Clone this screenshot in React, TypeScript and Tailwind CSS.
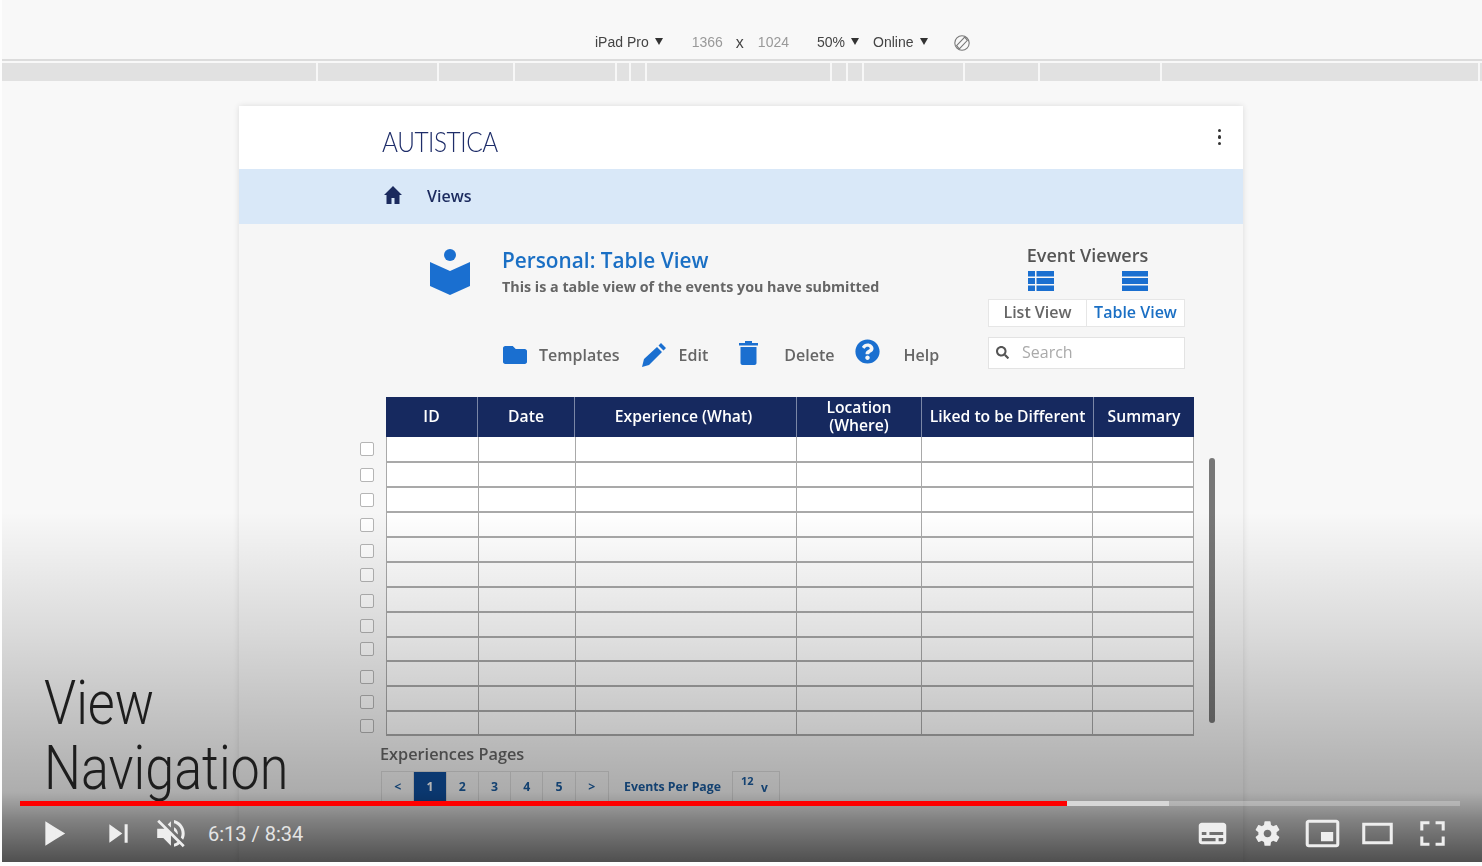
import { FaFolder, FaQuestionCircle, FaSearch } from "react-icons/fa";

const rulerWidths = [316, 121, 76, 102, 14, 16, 185, 16, 16, 101, 75, 122, 318];
const columns = ["w-[92px]", "w-[97px]", "w-[222px]", "w-[125px]", "w-[172px]", "w-[100px]"];
const headers = ["ID", "Date", "Experience (What)", "Location (Where)", "Liked to be Different", "Summary"];
const rows = [
  { height: "h-[26px]", box: "" },
  { height: "h-[25px]", box: "" },
  { height: "h-[25px]", box: "" },
  { height: "h-[25px]", box: "" },
  { height: "h-[25px]", box: "mt-[2px]" },
  { height: "h-[25px]", box: "" },
  { height: "h-[25px]", box: "mt-[2px]" },
  { height: "h-[25px]", box: "mt-[2px]" },
  { height: "h-[24px]", box: "" },
  { height: "h-[25px]", box: "mt-[6px]" },
  { height: "h-[25px]", box: "mt-[6px]" },
  { height: "h-[24px]", box: "mt-[6px]" },
];
const pages = ["<", "1", "2", "3", "4", "5", ">"];

function Tri() {
  return <span className="ml-[6px] mb-[3px] inline-block border-x-[4px] border-t-[7px] border-x-transparent border-t-[#333]" />;
}

function Yt({ d, className = "" }: { d: string; className?: string }) {
  return (
    <svg viewBox="0 0 36 36" className={`h-[55px] w-[55px] shrink-0 fill-[#eee] ${className}`}>
      <path d={d} fillRule="evenodd" />
    </svg>
  );
}

function DeviceBar() {
  return (
    <>
      <div className="flex h-[58px] items-center pt-[27px] pl-[593px] text-[14px] text-[#444] [font-family:'Liberation_Sans',sans-serif]">
        <span>iPad Pro</span>
        <Tri />
        <span className="ml-[29px] text-[#999]">1366</span>
        <span className="ml-[13px] text-[16px] text-[#444]">x</span>
        <span className="ml-[14px] text-[#999]">1024</span>
        <span className="ml-[28px]">50%</span>
        <Tri />
        <span className="ml-[14px]">Online</span>
        <Tri />
        <svg viewBox="0 0 20 20" className="ml-[25px] h-[18px] w-[18px] fill-none stroke-[#777] stroke-[1.2]">
          <circle cx="10" cy="10" r="8" />
          <path d="M4 13 13 3.500 16 7 7 16.500z" />
        </svg>
      </div>
      <div className="mt-px h-[2px] bg-[#dcdcdc]" />
      <div className="mt-[2px] flex h-[18px] bg-[#e1e1e1]">
        {rulerWidths.map((w, i) => (
          <div key={i} className="shrink-0 border-r-2 border-[#f7f7f7]" style={{ width: w }} />
        ))}
      </div>
    </>
  );
}

function Toolbar() {
  return (
    <div className="mt-[42px] flex items-center pl-[72px] text-[16px] font-semibold text-[#666]">
      <FaFolder className="h-[24px] w-[26px] text-[#1a6fd0]" />
      <span className="ml-[11px]">Templates</span>
      <svg viewBox="0 0 24 24" className="ml-[22px] h-[24px] w-[24px] shrink-0 fill-[#1a6fd0]">
        <path d="M0 24 2 16 15 4 20 9 7 22ZM16.500 2.500 19 0 24 5 21.500 7.500Z" />
      </svg>
      <span className="ml-[13px]">Edit</span>
      <svg viewBox="0 0 19 24" className="ml-[31px] mb-[4px] h-[24px] w-[19px] shrink-0 fill-[#1a6fd0]">
        <path d="M6 0H13V2H19V4.500H0V2H6ZM1.500 6H17.500V22C17.500 23 16.500 24 15.500 24H3.500C2.500 24 1.500 23 1.500 22Z" />
      </svg>
      <span className="ml-[26px]">Delete</span>
      <FaQuestionCircle className="ml-[21px] mb-[6px] h-[25px] w-[25px] text-[#1a6fd0]" />
      <span className="ml-[23px]">Help</span>
    </div>
  );
}

function EventViewers() {
  return (
    <div className="w-[197px] pt-[20px] text-center">
      <div className="h-[22px] pl-[2px] text-[18px] leading-[22px] font-semibold text-[#555]">Event Viewers</div>
      <div className="mt-[5px] flex h-[20px] pl-[40px]">
        <svg viewBox="0 0 26 20" className="h-[20px] w-[26px] fill-[#1a6fd0]">
          <path d="M0 0h7v5.500H0zM8.500 0H26v5.500H8.500zM0 7h7v6H0zM8.500 7H26v6H8.500zM0 14.500h7V20H0zM8.500 14.500H26V20H8.500z" />
        </svg>
        <svg viewBox="0 0 26 20" className="ml-[68px] h-[20px] w-[26px] fill-[#1a6fd0]">
          <path d="M0 0h26v5.500H0zM0 7h26v6H0zM0 14.500h26V20H0z" />
        </svg>
      </div>
      <div className="mt-[8px] flex h-[28px] border border-[#e6e6e6] bg-white text-[16px] leading-[24px] font-semibold">
        <div className="w-[98px] border-r border-[#e6e6e6] text-[#666]">List View</div>
        <div className="flex-1 text-[#1a6fc4]">Table View</div>
      </div>
      <div className="mt-[10px] flex h-[32px] items-center border border-[#e3e3e3] bg-white pb-[2px] pl-[7px] text-[16px] font-medium text-[#aaa]">
        <FaSearch className="h-[13px] w-[13px] text-[#555]" />
        <span className="ml-[13px]">Search</span>
      </div>
    </div>
  );
}

function DataTable() {
  return (
    <div className="ml-[121px] flex">
      <div>
        <div className="ml-[26px] flex h-[40px] w-[808px] bg-[#16295f] text-center text-[15.700px] leading-[18px] font-semibold text-white">
          {headers.map((h, i) => (
            <div key={h} className={`${columns[i]} flex items-center justify-center border-r border-[#7a86a6] pb-[3px] last:border-r-0 ${i === 3 ? "px-6" : ""} ${i === 2 ? "pr-[4px]" : ""}`}>
              {h}
            </div>
          ))}
        </div>
        {rows.map((row, r) => (
          <div key={r} className={`flex items-center ${row.height}`}>
            <div className={`h-[14px] w-[14px] shrink-0 -translate-y-px rounded-[2px] border border-[#b5b5b5] bg-white ${row.box}`} />
            <div className="ml-[12px] flex h-full w-[808px] border-x border-b-2 border-[#a9a9a9] bg-white">
              {columns.map((c) => (
                <div key={c} className={`${c} border-r border-[#a9a9a9] last:border-r-0`} />
              ))}
            </div>
          </div>
        ))}
      </div>
      <div className="mt-[61px] ml-[15px] h-[265px] w-[6px] rounded-full bg-[#777]" />
    </div>
  );
}

function Pager() {
  return (
    <div className="mt-[8px] ml-[141px]">
      <div className="text-[16.300px] leading-[20px] font-semibold text-[#666]">Experiences Pages</div>
      <div className="mt-[7px] ml-px flex h-[32px] items-center text-[12.300px] font-bold text-[#1c5da0]">
        <div className="flex h-full w-[228px] border border-[#ddd]">
          {pages.map((p) => (
            <div key={p} className={`flex w-[32.500px] items-center justify-center border-r border-[#ddd] last:border-r-0 ${p === "1" ? "bg-[#0f4f9e] text-white" : ""}`}>
              {p}
            </div>
          ))}
        </div>
        <span className="ml-[15px]">Events Per Page</span>
        <div className="relative ml-[11px] h-full w-[48px] border border-[#ddd]">
          <span className="absolute top-[1px] left-[8px] text-[11px]">12</span>
          <span className="absolute top-[7px] left-[28px] text-[12px]">v</span>
        </div>
      </div>
    </div>
  );
}

function PlayerControls() {
  return (
    <div className="absolute inset-x-0 bottom-0 h-[350px] bg-[linear-gradient(to_bottom,rgba(0,0,0,0)_0%,rgba(0,0,0,0.12)_35%,rgba(0,0,0,0.3)_80%,rgba(0,0,0,0.48)_88%,rgba(0,0,0,0.68)_100%)]">
      <div className="absolute top-[158px] left-[42px] origin-left scale-x-[0.84] text-[62px] leading-[65px] font-light text-[#1d1d1d] [font-family:Roboto,sans-serif]">
        <div>View</div>
        <div>Navigation</div>
      </div>
      <div className="absolute top-[289px] left-[18px] flex h-[5px] w-[1440px] bg-[#ffffff]/25">
        <div className="relative h-full w-[1149px] bg-[#d8d8d8]">
          <div className="h-full w-[1047px] bg-[#ff0000]" />
        </div>
      </div>
      <div className="absolute top-[294px] flex h-[55px] w-full items-center pl-[25px] text-[#eee]">
        <Yt d="M12 26 18.500 22V14L12 10zM18.500 22 25 18 18.500 14z" />
        <Yt className="ml-[9px]" d="M12 24 20.500 18 12 12V24zM22 12V24H24V12H22z" />
        <Yt className="-ml-[1px]" d="M21.480 17.980c0-1.770-1.020-3.290-2.500-4.030v2.210l2.450 2.450c.03-.2.05-.41.05-.63zm2.500 0c0 .94-.2 1.820-.54 2.640l1.510 1.510c.66-1.240 1.030-2.650 1.030-4.150 0-4.280-2.990-7.860-7-8.760v2.050c2.890.86 5 3.540 5 6.710zM9.250 8.980 7.980 10.240 12.700 14.970H7.980v6H11.980l5 5v-6.730l4.250 4.250c-.67.52-1.420.93-2.250 1.180v2.060c1.380-.31 2.630-.95 3.690-1.810l2.040 2.050 1.270-1.270-9-9-7.720-7.720zm7.720.99-2.090 2.080 2.090 2.090V9.970z" />
        <span className="ml-[8px] text-[20px] text-[#e4e4e4] [font-family:Roboto,sans-serif]">6:13 / 8:34</span>
        <div className="ml-auto flex pr-[22px]">
          <Yt d="M11 11C9.900 11 9 11.900 9 13V23C9 24.100 9.900 25 11 25H25C26.100 25 27 24.100 27 23V13C27 11.900 26.100 11 25 11zM11 17H14V19H11zM16 17H25V19H16zM11 21H20V23H11zM22 21H25V23H22z" />
          <Yt d="M23.940 18.780c.03-.25.05-.51.05-.78s-.02-.52-.05-.78l1.680-1.320c.15-.12.19-.33.09-.51l-1.600-2.760c-.09-.17-.31-.24-.48-.17l-1.990.8c-.41-.32-.86-.58-1.350-.78L20 10.350C19.970 10.160 19.800 10 19.600 10h-3.200c-.2 0-.37.16-.39.35l-.3 2.120c-.48.2-.93.47-1.350.78l-1.990-.8c-.18-.07-.39 0-.48.17l-1.600 2.760c-.1.17-.05.39.09.51l1.680 1.320c-.03.25-.05.52-.05.78s.02.52.05.78l-1.680 1.320c-.15.12-.19.33-.09.51l1.600 2.760c.09.17.31.24.48.17l1.990-.8c.41.32.86.58 1.350.78l.3 2.120c.02.19.19.35.39.35h3.200c.2 0 .37-.16.39-.35l.3-2.120c.48-.2.93-.47 1.350-.78l1.990.8c.18.07.39 0 .48-.17l1.600-2.760c.09-.17.05-.39-.09-.51l-1.680-1.320zM18 20.500c-1.380 0-2.500-1.120-2.500-2.500s1.120-2.500 2.500-2.500 2.500 1.120 2.500 2.500-1.120 2.500-2.500 2.500z" />
          <Yt d="M25 17H17V23H25V17ZM29 25V10.980C29 9.880 28.100 9 27 9H9C7.900 9 7 9.880 7 10.980V25C7 26.100 7.900 27 9 27H27C28.100 27 29 26.100 29 25ZM27 25.020H9V10.970H27V25.020Z" />
          <Yt d="M28 11V25H8V11ZM10 13H26V23H10Z" />
          <Yt d="M10 16H12V12H16V10H10ZM20 10V12H24V16H26V10ZM24 24H20V26H26V20H24ZM12 20H10V26H16V24H12Z" />
        </div>
      </div>
    </div>
  );
}

export default function App() {
  return (
    <div className="h-[866px] w-[1482px] overflow-hidden bg-[#fdfdfd] pb-[4px] pl-[2px] [font-family:'Open_Sans',sans-serif]">
      <div className="relative h-[862px] overflow-hidden bg-[#f8f8f8]">
        <div className="blur-[0.4px]">
          <DeviceBar />
          <div className="mt-[25px] ml-[237px] h-[760px] w-[1004px] bg-[#f6f6f6] shadow-[0_0_6px_rgba(0,0,0,0.12)]">
            <div className="flex h-[63px] items-center justify-between bg-white pr-[22px] pl-[143px]">
              <span className="mt-[6px] origin-left scale-x-[0.87] text-[28px] font-light tracking-[-0.5px] text-[#1e2d69] [font-family:Lato,sans-serif]">AUTISTICA</span>
              <div className="mb-[1px] flex flex-col gap-[3px]">
                <i className="h-[3.500px] w-[3.500px] rounded-full bg-[#333]" />
                <i className="h-[3.500px] w-[3.500px] rounded-full bg-[#333]" />
                <i className="h-[3.500px] w-[3.500px] rounded-full bg-[#333]" />
              </div>
            </div>
            <div className="flex h-[55px] items-center bg-[#d9e8f8] pl-[145px] text-[16px] font-semibold text-[#1b2a5e]">
              <svg viewBox="0 0 18 18" className="mb-[4px] h-[18px] w-[18px] fill-[#1b2a5e]">
                <path d="M9 0 18 9H15.500V18H10.500V12H7.500V18H2.500V9H0Z" />
              </svg>
              <span className="mb-[1px] ml-[25px]">Views</span>
            </div>
            <div className="flex h-[173px]">
              <div className="w-[749px] pl-[191px]">
                <div className="flex pt-[25px]">
                  <svg viewBox="0 0 40 46" className="h-[46px] w-[40px] shrink-0 fill-[#1a6fd0]">
                    <circle cx="20" cy="6" r="6" />
                    <path d="M0 13 20 22 40 13V37L20 46 0 37Z" />
                  </svg>
                  <div className="ml-[32px] -mt-[1px]">
                    <div className="text-[20.800px] leading-[24px] font-semibold text-[#1a6fc4]">Personal: Table View</div>
                    <div className="mt-[5px] text-[14.300px] leading-[20px] font-bold text-[#666]">This is a table view of the events you have submitted</div>
                  </div>
                </div>
                <Toolbar />
              </div>
              <EventViewers />
            </div>
            <DataTable />
            <Pager />
          </div>
        </div>
        <PlayerControls />
      </div>
    </div>
  );
}
